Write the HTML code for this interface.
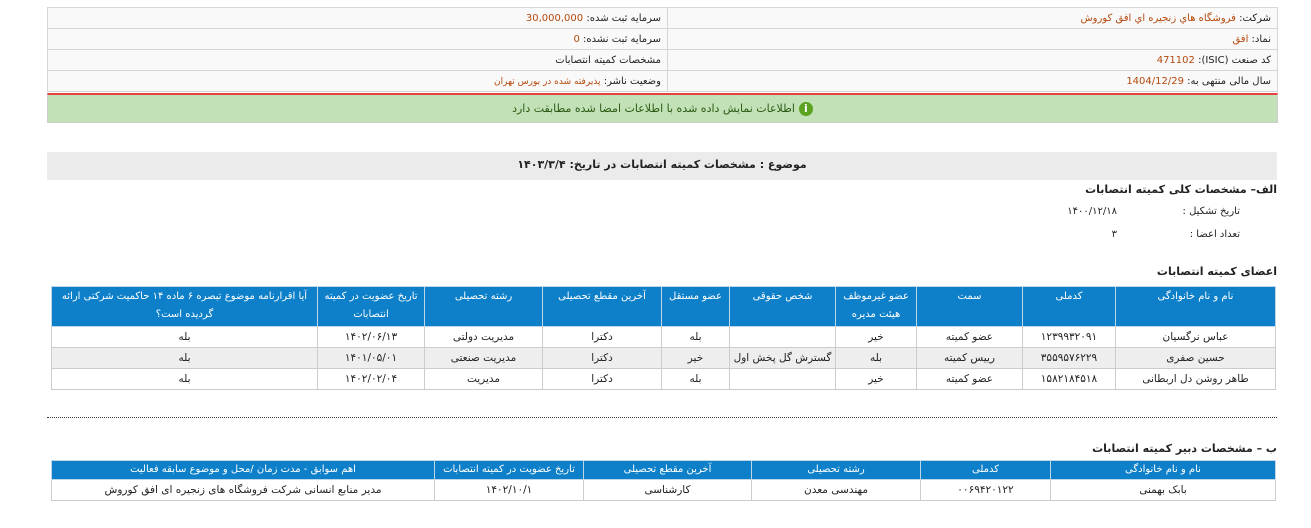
<!DOCTYPE html>
<html dir="rtl"><head><meta charset="utf-8"><style>
body{margin:0;width:1311px;height:528px;background:#fff;font-family:"DejaVu Sans",sans-serif;font-size:10px;color:#222;position:relative;overflow:hidden}
.a{position:absolute}
table{border-collapse:collapse;table-layout:fixed}
.top{left:47px;top:7px;width:1231px;background:#f9f9f9}
.top td{border:1px solid #d6d6d6;height:20px;padding:0 6px;font-size:10px}
.o{color:#b5480c}
.g{left:47px;top:93px;width:1229px;height:27px;border-top:2px solid #e84040;background:#c3e1b6;border-left:1px solid #ccc;border-right:1px solid #ccc;border-bottom:1px solid #ccc;text-align:center;line-height:27px;color:#2a5a14;font-size:11px}
.ic{display:inline-block;width:14px;height:14px;border-radius:50%;background:#5aa220;color:#fff;font-weight:bold;font-size:11px;line-height:14px;vertical-align:middle;margin-left:4px}
.bar{left:47px;top:152px;width:1230px;height:28px;background:#ebebeb;text-align:center;line-height:26px;font-weight:bold;font-size:11px}
.h{font-weight:bold;font-size:11px;right:34px}
.m{left:51px;width:1225px}
.m th{background:#0d80c9;color:#fff;font-weight:normal;border:1px solid #bfd6e8;font-size:10px;padding:1px 2px;line-height:18px;vertical-align:top}
.m2 th{line-height:16px}
.m td{border:1px solid #ccc;text-align:center;height:20px;padding:0;font-size:10.5px}
.m tr.s td{background:#eee}
</style></head><body>
<table class="a top"><tr><td style="width:597px">شرکت: <span class="o">فروشگاه هاي زنجيره اي افق کوروش</span></td><td>سرمایه ثبت شده: <span class="o">30,000,000</span></td></tr>
<tr><td>نماد: <span class="o">افق</span></td><td>سرمایه ثبت نشده: <span class="o">0</span></td></tr>
<tr><td>کد صنعت (ISIC): <span class="o">471102</span></td><td>مشخصات کمیته انتصابات</td></tr>
<tr><td>سال مالی منتهی به: <span class="o">1404/12/29</span></td><td>وضعیت ناشر: <span class="o" style="font-size:9px">پذیرفته شده در بورس تهران</span></td></tr></table>
<div class="a g"><span class="ic">i</span>اطلاعات نمایش داده شده با اطلاعات امضا شده مطابقت دارد</div>
<div class="a bar">موضوع : مشخصات کمیته انتصابات در تاریخ: ۱۴۰۳/۳/۴</div>
<div class="a h" style="top:183px">الف– مشخصات کلی کمیته انتصابات</div>
<div class="a" style="right:71px;top:206px">تاریخ تشکیل :</div><div class="a" style="right:194px;top:206px">۱۴۰۰/۱۲/۱۸</div>
<div class="a" style="right:71px;top:229px">تعداد اعضا :</div><div class="a" style="right:194px;top:229px">۳</div>
<div class="a h" style="top:265px">اعضای کمیته انتصابات</div>
<table class="a m" style="top:286px">
<tr style="height:40px"><th style="width:155px">نام و نام خانوادگی</th><th style="width:88px">کدملی</th><th style="width:101px">سمت</th><th style="width:76px">عضو غیرموظف هیئت مدیره</th><th style="width:101px">شخص حقوقی</th><th style="width:63px">عضو مستقل</th><th style="width:114px">آخرین مقطع تحصیلی</th><th style="width:113px">رشته تحصیلی</th><th style="width:102px">تاریخ عضویت در کمیته انتصابات</th><th>آیا اقرارنامه موضوع تبصره ۶ ماده ۱۴ حاکمیت شرکتی ارائه گردیده است؟</th></tr>
<tr><td>عباس نرگسیان</td><td>۱۲۳۹۹۳۲۰۹۱</td><td>عضو کمیته</td><td>خیر</td><td></td><td>بله</td><td>دکترا</td><td>مدیریت دولتی</td><td>۱۴۰۲/۰۶/۱۳</td><td>بله</td></tr>
<tr class="s"><td>حسین صفری</td><td>۳۵۵۹۵۷۶۲۲۹</td><td>رییس کمیته</td><td>بله</td><td>گسترش گل پخش اول</td><td>خیر</td><td>دکترا</td><td>مدیریت صنعتی</td><td>۱۴۰۱/۰۵/۰۱</td><td>بله</td></tr>
<tr><td>طاهر روشن دل اربطانی</td><td>۱۵۸۲۱۸۴۵۱۸</td><td>عضو کمیته</td><td>خیر</td><td></td><td>بله</td><td>دکترا</td><td>مدیریت</td><td>۱۴۰۲/۰۲/۰۴</td><td>بله</td></tr>
</table>
<div class="a" style="left:47px;top:417px;width:1230px;border-top:1px dotted #333"></div>
<div class="a h" style="top:442px">ب – مشخصات دبیر کمیته انتصابات</div>
<table class="a m m2" style="top:460px">
<tr><th style="width:220px">نام و نام خانوادگی</th><th style="width:125px">کدملی</th><th style="width:164px">رشته تحصیلی</th><th style="width:163px">آخرین مقطع تحصیلی</th><th style="width:144px">تاریخ عضویت در کمیته انتصابات</th><th>اهم سوابق - مدت زمان /محل و موضوع سابقه فعالیت</th></tr>
<tr><td>بابک بهمنی</td><td>۰۰۶۹۴۲۰۱۲۲</td><td>مهندسی معدن</td><td>کارشناسی</td><td>۱۴۰۲/۱۰/۱</td><td>مدیر منابع انسانی شرکت فروشگاه های زنجیره ای افق کوروش</td></tr>
</table>
</body></html>
